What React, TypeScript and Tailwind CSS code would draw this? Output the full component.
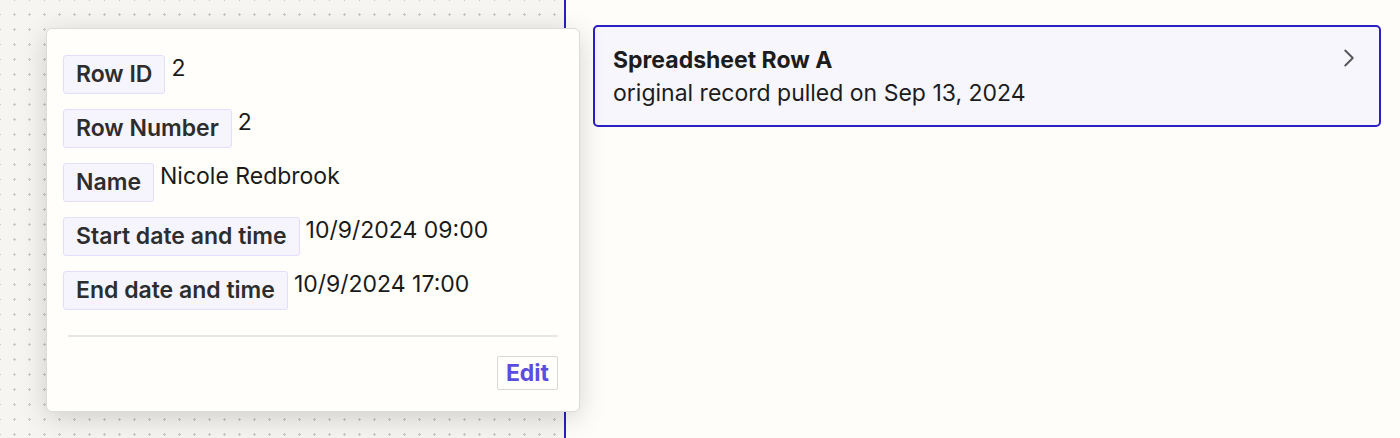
import { ChevronRight } from 'lucide-react';

const fields = [
  { label: 'Row ID', value: '2' },
  { label: 'Row Number', value: '2' },
  { label: 'Name', value: 'Nicole Redbrook' },
  { label: 'Start date and time', value: '10/9/2024 09:00' },
  { label: 'End date and time', value: '10/9/2024 17:00' },
];

function FieldRow({ label, value }: { label: string; value: string }) {
  return (
    <div className="flex items-start gap-[6px]">
      <span className="h-[39px] px-[12px] flex items-center bg-[#f6f5fe] border border-[#e2defb] rounded-[3px] text-[23px] font-semibold text-[#2d2d2d] leading-none">
        {label}
      </span>
      <span className="text-[23px] text-[#1a1a1a] leading-none pt-[2px]">{value}</span>
    </div>
  );
}

export default function App() {
  return (
    <div className="relative flex h-[438px] w-[1400px] overflow-hidden bg-[#fffdf9] font-['Inter',sans-serif]">
      {/* Canvas */}
      <div className="w-[564px] h-full bg-[#f6f5f1] bg-[radial-gradient(circle,#c9c8c4_1px,transparent_1.2px)] bg-[size:15px_15px] bg-[position:7px_7px]" />
      <div className="w-[2px] h-full bg-[#2b1fc2]" />

      {/* Right side */}
      <div className="flex-1 pt-[25px] pl-[27px] pr-[19px]">
        <div className="flex items-start justify-between border-2 border-[#2b1fc2] rounded-[5px] bg-[#f7f6fd] pl-[18px] pr-[15px] pt-[17px] pb-[15px]">
          <div className="flex flex-col">
            <span className="text-[23px] font-bold text-[#1c1c1c] leading-[33px]">Spreadsheet Row A</span>
            <span className="text-[23px] text-[#1c1c1c] leading-[33px]">original record pulled on Sep 13, 2024</span>
          </div>
          <ChevronRight size={30} strokeWidth={1.5} className="text-[#555] mt-[-1px]" />
        </div>
      </div>

      {/* Popover */}
      <div className="absolute left-[46px] top-[28px] w-[534px] h-[384px] bg-[#fffefb] border border-[#dcdbd8] rounded-[6px] shadow-[0_6px_28px_rgba(0,0,0,0.16)] flex flex-col pl-[16px] pr-[21px] pt-[26px]">
        <div className="flex flex-col gap-[15px]">
          {fields.map((f) => (
            <FieldRow key={f.label} label={f.label} value={f.value} />
          ))}
        </div>
        <div className="mt-[25px] ml-[5px] h-[2px] bg-[#e8e7e4]" />
        <div className="flex justify-end mt-[19px]">
          <button className="h-[34px] px-[8px] border border-[#d9d8d5] rounded-[2px] text-[23px] font-bold text-[#5b4de0] leading-none bg-[#fffefb]">
            Edit
          </button>
        </div>
      </div>
    </div>
  );
}
